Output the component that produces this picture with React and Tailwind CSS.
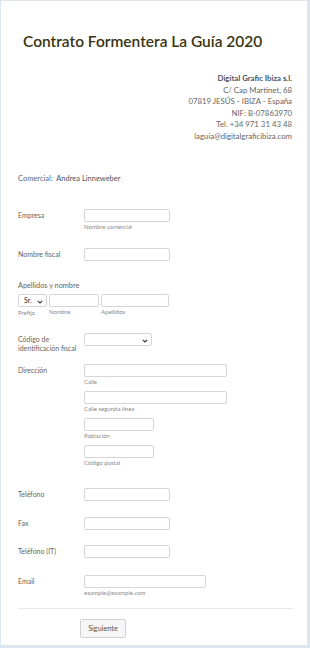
import React from "react";

const F = { fontFamily: "Lato, 'Open Sans', sans-serif" };
const inp = "h-[13px] border border-[#d6d6d6] rounded-[2px] bg-white";
const lbl = "w-[66px] shrink-0 text-[7px] leading-[13px] text-[#6d5f52]";
const sub = "text-[6px] leading-[7px] text-[#8a8a8a] mt-[1px]";

function Chevron() {
  return (
    <svg width="6" height="4" viewBox="0 0 6 4" className="absolute right-[3px] top-[4.5px]">
      <path d="M0.8 0.8 L3 3 L5.2 0.8" fill="none" stroke="#333" strokeWidth="1.1" />
    </svg>
  );
}

export default function App() {
  return (
    <div style={F} className="min-h-[648px] bg-[#dbe6f1] pt-px pl-px pr-[2px] pb-[2px]">
      <div className="bg-white border-r border-b border-[#e3e6ea] min-h-[645px] flex flex-col">
        <h1 className="mt-[30px] ml-[22px] text-[15.5px] leading-[20px] font-semibold text-[#3a3412]">
          Contrato Formentera La Guía 2020
        </h1>
        <div className="mt-[22px] pr-[15px] text-right text-[7.8px] leading-[11.5px] text-[#666]">
          <div className="font-bold text-[#4b5363]">Digital Grafic Ibiza s.l.</div>
          <div>C/ Cap Martinet, 68</div>
          <div>07819 JESÚS - IBIZA - España</div>
          <div>NIF: B-07863970</div>
          <div>Tel. +34 971 31 43 48</div>
          <div>laguia@digitalgraficibiza.com</div>
        </div>

        <div className="mt-[32px] ml-[17px] text-[7.5px] leading-[10px] text-[#5f6673]">
          Comercial:&nbsp; <span className="text-[#4b5363]">Andrea Linneweber</span>
        </div>

        <div className="pl-[17px] pr-[15px]">
          <div className="flex mt-[25px]">
            <div className={lbl}>Empresa</div>
            <div>
              <div className={inp + " w-[86px]"} />
              <div className={sub}>Nombre comercial</div>
            </div>
          </div>

          <div className="flex mt-[18px]">
            <div className={lbl}>Nombre fiscal</div>
            <div className={inp + " w-[86px]"} />
          </div>

          <div className="mt-[20px] text-[7.3px] leading-[10px] text-[#6d5f52]">Apellidos y nombre</div>
          <div className="flex gap-[2px] mt-[3px]">
            <div>
              <div className={inp + " w-[29px] relative text-[7px] leading-[11px] pl-[5px] text-[#333]"}>
                Sr.
                <Chevron />
              </div>
              <div className={sub + " mt-[2px]"}>Prefijo</div>
            </div>
            <div>
              <div className={inp + " w-[50px]"} />
              <div className={sub}>Nombre</div>
            </div>
            <div>
              <div className={inp + " w-[68px]"} />
              <div className={sub}>Apellidos</div>
            </div>
          </div>

          <div className="flex mt-[17px]">
            <div className="w-[66px] shrink-0 text-[7px] leading-[8.7px] text-[#6d5f52] pt-[2px]">
              Código de identificación fiscal
            </div>
            <div className={inp + " w-[68px] relative"}>
              <Chevron />
            </div>
          </div>

          <div className="flex mt-[12px]">
            <div className={lbl}>Dirección</div>
            <div className="flex flex-col">
              <div className={inp + " w-[143px]"} />
              <div className={sub}>Calle</div>
              <div className={inp + " w-[143px] mt-[6px]"} />
              <div className={sub}>Calle segunda línea</div>
              <div className={inp + " w-[70px] mt-[6px]"} />
              <div className={sub}>Población</div>
              <div className={inp + " w-[70px] mt-[6px]"} />
              <div className={sub}>Código postal</div>
            </div>
          </div>

          <div className="flex mt-[22px]">
            <div className={lbl}>Teléfono</div>
            <div className={inp + " w-[86px]"} />
          </div>
          <div className="flex mt-[15.5px]">
            <div className={lbl}>Fax</div>
            <div className={inp + " w-[86px]"} />
          </div>
          <div className="flex mt-[15.5px]">
            <div className={lbl}>Teléfono (IT)</div>
            <div className={inp + " w-[86px]"} />
          </div>
          <div className="flex mt-[17px]">
            <div className={lbl}>Email</div>
            <div>
              <div className={inp + " w-[122px]"} />
              <div className={sub}>example@example.com</div>
            </div>
          </div>

          <div className="mt-[12px] border-t border-[#e8e8e8] mr-[-1px]" />
          <div className="mt-[10px] ml-[62px] flex">
            <button className="w-[46px] h-[19px] border border-[#d0d0d0] rounded-[2px] bg-[#f6f6f6] text-[7.3px] leading-[17px] text-[#555]">
              Siguiente
            </button>
          </div>
        </div>
      </div>
    </div>
  );
}
